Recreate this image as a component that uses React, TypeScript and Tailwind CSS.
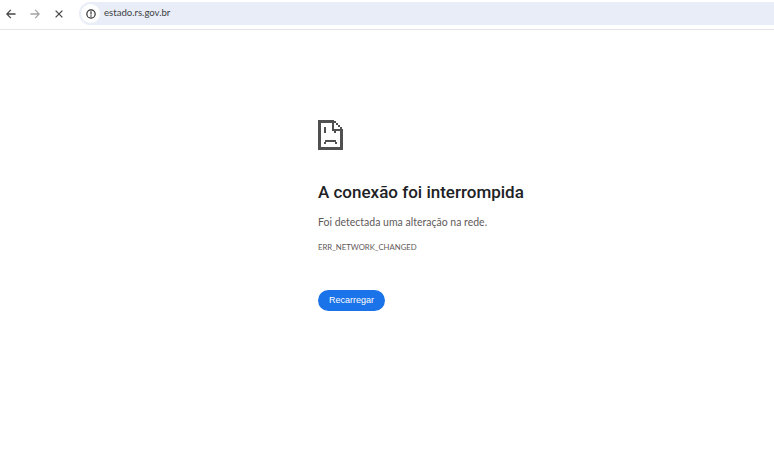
import React from 'react';

function SadFile() {
  return (
    <svg width="26" height="30" viewBox="0 0 26 30" fill="#505050" shapeRendering="crispEdges">
      {/* outline */}
      <rect x="0" y="0" width="16" height="3" />
      <rect x="0" y="0" width="3" height="30" />
      <rect x="0" y="27" width="25" height="3" />
      <rect x="22" y="10" width="3" height="20" />
      {/* folded corner */}
      <rect x="14" y="2" width="2" height="8" />
      <rect x="14" y="9" width="11" height="2" />
      <rect x="16" y="1" width="2" height="2" />
      <rect x="18" y="3" width="2" height="2" />
      <rect x="20" y="5" width="2" height="2" />
      <rect x="22" y="7" width="2" height="2" />
      {/* eyes */}
      <rect x="6" y="7" width="2" height="6" />
      <rect x="16" y="10" width="2" height="3" />
      {/* mouth */}
      <rect x="7" y="20" width="11" height="2" />
      <rect x="6" y="22" width="2" height="2" />
      <rect x="17" y="22" width="2" height="2" />
    </svg>
  );
}

function TopBar() {
  return (
    <div className="h-[30px] flex items-start border-b border-[#e4e4e4] bg-white">
      <div className="w-[79px] h-[28px] flex items-center shrink-0">
        <svg className="ml-[6px]" width="10" height="10" viewBox="0 0 11 11" fill="none" stroke="#474747" strokeWidth="1.4">
          <path d="M10.5 5.5H1M5.3 1 .9 5.5 5.3 10" />
        </svg>
        <svg className="ml-[14px]" width="10" height="10" viewBox="0 0 11 11" fill="none" stroke="#a3a3a3" strokeWidth="1.4">
          <path d="M.5 5.5H10M5.7 1l4.4 4.5L5.7 10" />
        </svg>
        <svg className="ml-[15px]" width="8" height="8" viewBox="0 0 9 9" fill="none" stroke="#474747" strokeWidth="1.5">
          <path d="M.7.7l7.6 7.6M8.3.7 .7 8.3" />
        </svg>
      </div>
      <div className="flex-1 mt-[2px] h-[23px] rounded-l-full bg-[#e9edf7] flex items-center">
        <div className="ml-[2px] w-[19px] h-[19px] rounded-full bg-white flex items-center justify-center">
          <svg width="10" height="10" viewBox="0 0 11 11" fill="none" stroke="#2b2b2b">
            <circle cx="5.5" cy="5.5" r="4.6" strokeWidth="1.3" />
            <path d="M5.5 2.6v3.4M5.5 7v1.4" strokeWidth="1.3" />
          </svg>
        </div>
        <span className="ml-[4px] text-[9.6px] text-[#3c4043] font-['Lato',sans-serif]">estado.rs.gov.br</span>
      </div>
    </div>
  );
}

export default function App() {
  return (
    <div className="w-[774px] h-[459px] overflow-hidden bg-white font-['Lato',sans-serif]">
      <TopBar />
      <main className="pl-[318px] pt-[90px]">
        <SadFile />
        <h1 className="mt-[30px] text-[17px] leading-[24px] font-medium font-['Roboto',sans-serif] text-[#202124]">A conexão foi interrompida</h1>
        <p className="mt-[10px] text-[10.5px] leading-[16px] text-[#5f5a5a]">Foi detectada uma alteração na rede.</p>
        <p className="mt-[11px] text-[7.75px] leading-[12px] text-[#5f5a5a]">ERR_NETWORK_CHANGED</p>
        <button className="mt-[37px] w-[67px] h-[21px] rounded-full bg-[#1a73e8] text-white text-[9px] font-['Liberation_Sans',sans-serif] flex items-center justify-center">
          Recarregar
        </button>
      </main>
    </div>
  );
}
